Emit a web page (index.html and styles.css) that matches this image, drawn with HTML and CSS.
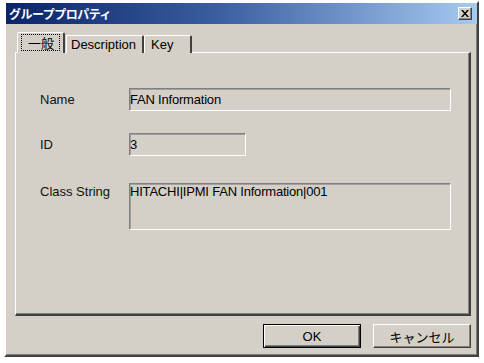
FILE: index.html
```html
<!DOCTYPE html>
<html lang="ja">
<head>
    <meta charset="UTF-8">
    <title>グループプロパティ</title>
    <link rel="stylesheet" href="styles.css">
</head>
<body>

    <div class="window">
        <div class="titlebar">
            <span class="title">グループプロパティ</span>
            <button class="close-btn">
                <svg width="8" height="7" viewBox="0 0 8 7">
                    <path d="M0 0h2l2 2.5L6 0h2L5 3.5 8 7H6L4 4.5 2 7H0l3-3.5z" fill="#000"/>
                </svg>
            </button>
        </div>

        <div class="dialog-body">
            <!-- Tabs -->
            <div class="tabs">
                <div class="tab active"><span class="focus">一般</span></div>
                <div class="tab">Description</div>
                <div class="tab">Key</div>
            </div>

            <div class="panel">
                <div class="row row-name">
                    <span class="label">Name</span>
                    <div class="field field-wide">FAN Information</div>
                </div>
                <div class="row row-id">
                    <span class="label">ID</span>
                    <div class="field field-short">3</div>
                </div>
                <div class="row row-class">
                    <span class="label">Class String</span>
                    <div class="field field-wide field-tall">HITACHI|IPMI FAN Information|001</div>
                </div>
            </div>

            <!-- Buttons -->
            <div class="buttons">
                <button class="button default">OK</button>
                <button class="button">キャンセル</button>
            </div>
        </div>
    </div>

</body>
</html>
```

FILE: styles.css
```css
body {
    margin: 0;
    background: #fff;
    font-family: 'Liberation Sans', 'Noto Sans CJK JP', sans-serif;
    font-size: 13px;
    color: #000;
}

.window {
    box-sizing: border-box;
    width: 475px;
    height: 356px;
    margin: 1px 0 0 4px;
    background: #d4d0c8;
    border-top: 2px solid #fff;
    border-left: 2px solid #fff;
    border-right: 2px solid #404040;
    border-bottom: 2px solid #404040;
    box-shadow: inset -1px -1px 0 #808080;
}

.titlebar {
    height: 21px;
    display: flex;
    align-items: center;
    justify-content: space-between;
    background: linear-gradient(90deg, #0a246a, #3a5ea0 45%, #a6caf0);
    padding: 0 5px 0 3px;
}

.title {
    color: #fff;
    font-family: 'Noto Sans CJK JP', sans-serif;
    font-weight: bold;
    font-size: 12px;
    letter-spacing: -0.5px;
}

.close-btn {
    box-sizing: border-box;
    width: 14px;
    height: 13px;
    padding: 0;
    display: flex;
    align-items: center;
    justify-content: center;
    background: #d4d0c8;
    border: 1px solid;
    border-color: #fff #404040 #404040 #fff;
    box-shadow: inset -1px -1px 0 #808080;
}

.dialog-body {
    padding: 8px 0 0 9px;
}

.tabs {
    display: flex;
    align-items: flex-end;
    height: 21px;
    padding-left: 2px;
    position: relative;
    z-index: 1;
    margin-bottom: -1px;
}

.tab {
    box-sizing: border-box;
    height: 18px;
    padding: 0 4px;
    display: flex;
    align-items: center;
    border-top: 1px solid #fff;
    border-left: 1px solid #fff;
    border-right: 2px solid #404040;
    border-radius: 2px 2px 0 0;
    background: #d4d0c8;
}

.tab:nth-child(2) {
    width: 78px;
    margin-left: 1px;
}

.tab:nth-child(3) {
    width: 48px;
    padding-left: 6px;
}

.tab.active {
    width: 48px;
    height: 21px;
    padding: 2px 3px 3px;
    font-family: 'Noto Sans CJK JP', sans-serif;
    font-size: 13px;
}

.focus {
    flex: 1;
    height: 15px;
    line-height: 15px;
    padding-left: 6px;
    border: 1px dotted #000;
}

.panel {
    box-sizing: border-box;
    width: 456px;
    height: 264px;
    padding: 35px 0 0 24px;
    border-top: 1px solid #fff;
    border-left: 1px solid #fff;
    border-right: 2px solid #404040;
    border-bottom: 2px solid #404040;
    box-shadow: inset -1px -1px 0 #808080;
}

.row {
    display: flex;
    align-items: center;
}

.row-id {
    margin-top: 22px;
}

.row-class {
    margin-top: 27px;
    align-items: flex-start;
}

.row-class .label {
    padding-top: 1px;
}

.label {
    width: 89px;
    color: #111;
}

.field {
    box-sizing: border-box;
    height: 23px;
    padding: 0;
    line-height: 21px;
    background: #d4d0c8;
    border: 1px solid;
    border-color: #808080 #fff #fff #808080;
    box-shadow: inset 1px 1px 0 #a0a0a0;
    letter-spacing: -0.2px;
}

.field-wide {
    width: 322px;
}

.field-short {
    width: 117px;
}

.field-tall {
    height: 47px;
    line-height: 16px;
}

.buttons {
    display: flex;
    justify-content: flex-end;
    gap: 12px;
    margin-top: 8px;
    padding-right: 6px;
}

.button {
    box-sizing: border-box;
    width: 98px;
    height: 24px;
    font-family: 'Liberation Sans', 'Noto Sans CJK JP', sans-serif;
    font-size: 13px;
    background: #d4d0c8;
    border: 1px solid;
    border-color: #fff #404040 #404040 #fff;
    box-shadow: inset -1px -1px 0 #808080;
    padding: 0;
}

.button.default {
    border: 1px solid #000;
    box-shadow: inset 1px 1px 0 #fff, inset -1px -1px 0 #404040, inset -2px -2px 0 #808080;
}
```
